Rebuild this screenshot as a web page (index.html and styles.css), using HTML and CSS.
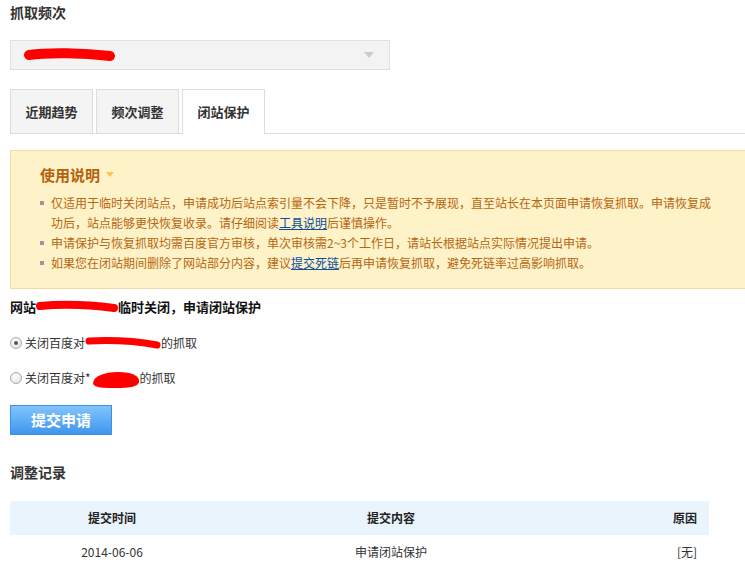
FILE: index.html
```
<!DOCTYPE html>
<html>
  <head>
    <meta charset="utf-8">
    <link rel="stylesheet" href="styles.css">
  </head>
  <body>
    <div class="page">
      <h2 class="title">抓取频次</h2>

      <div class="select">
        <svg class="scribble" width="92" height="16" viewBox="0 0 92 16">
          <path d="M5 8 C 25 5, 60 6, 86 9" stroke="#f00" stroke-width="10" stroke-linecap="round" fill="none"/>
        </svg>
        <span class="arrow"></span>
      </div>

      <div class="tabs">
        <div class="tab">近期趋势</div>
        <div class="tab">频次调整</div>
        <div class="tab active">闭站保护</div>
      </div>

      <div class="notice">
        <div class="notice-title">使用说明 <span class="caret"></span></div>
        <ul class="notice-list">
          <li>仅适用于临时关闭站点，申请成功后站点索引量不会下降，只是暂时不予展现，直至站长在本页面申请恢复抓取。申请恢复成功后，站点能够更快恢复收录。请仔细阅读<a href="#">工具说明</a>后谨慎操作。</li>
          <li>申请保护与恢复抓取均需百度官方审核，单次审核需2~3个工作日，请站长根据站点实际情况提出申请。</li>
          <li>如果您在闭站期间删除了网站部分内容，建议<a href="#">提交死链</a>后再申请恢复抓取，避免死链率过高影响抓取。</li>
        </ul>
      </div>

      <div class="site-line">网站<svg class="redact" width="82" height="14" viewBox="0 0 82 14"><path d="M4 6 C 25 4, 55 5, 78 8" stroke="#f00" stroke-width="8" stroke-linecap="round" fill="none"/></svg>临时关闭，申请闭站保护</div>

      <label class="option">
        <input type="radio" name="close" checked>
        <span>关闭百度对<svg class="redact" width="76" height="14" viewBox="0 0 76 14"><path d="M4 5 C 25 4, 50 5, 72 9" stroke="#f00" stroke-width="7" stroke-linecap="round" fill="none"/></svg>的抓取</span>
      </label>

      <label class="option">
        <input type="radio" name="close">
        <span>关闭百度对*<svg class="redact blob" width="48" height="18" viewBox="0 0 48 18"><path d="M1 12 C 2 5, 12 1, 26 1 C 40 1, 48 5, 47 11 C 46 17, 32 17, 20 17 C 8 17, 1 16, 1 12 Z" fill="#f00"/></svg>的抓取</span>
      </label>

      <button class="submit">提交申请</button>

      <h2 class="title records">调整记录</h2>

      <table class="log">
        <thead>
          <tr>
            <th class="c-time">提交时间</th>
            <th class="c-content">提交内容</th>
            <th class="c-reason">原因</th>
          </tr>
        </thead>
        <tbody>
          <tr>
            <td class="c-time">2014-06-06</td>
            <td class="c-content">申请闭站保护</td>
            <td class="c-reason">[无]</td>
          </tr>
        </tbody>
      </table>
    </div>
  </body>
</html>
```

FILE: styles.css
```
html, body {
  margin: 0;
  padding: 0;
  background: #fff;
}

body {
  font-family: "Noto Sans CJK SC", "Liberation Sans", sans-serif;
  font-size: 12px;
  color: #333;
  overflow: hidden;
}

.page {
  padding-left: 10px;
}

.title {
  margin: 0;
  padding-top: 2px;
  font-size: 14px;
  line-height: 20px;
  font-weight: bold;
  color: #333;
}

.select {
  margin-top: 18px;
  width: 378px;
  height: 28px;
  border: 1px solid #e0e0e0;
  background: #f3f3f3;
  position: relative;
  display: flex;
  align-items: center;
}
  .select .scribble {
    margin-left: 13px;
  }
  .select .arrow {
    position: absolute;
    right: 15px;
    top: 11px;
    border-left: 5px solid transparent;
    border-right: 5px solid transparent;
    border-top: 6px solid #ccc;
  }

.tabs {
  margin-top: 19px;
  display: flex;
  gap: 3px;
  border-bottom: 1px solid #ddd;
}

.tab {
  width: 81px;
  height: 43px;
  line-height: 43px;
  text-align: center;
  font-size: 13px;
  font-weight: bold;
  color: #333;
  background: #f4f4f4;
  border: 1px solid #ddd;
  border-bottom: none;
}
  .tab.active {
    background: #fff;
    margin-bottom: -1px;
    height: 44px;
  }

.notice {
  margin-top: 16px;
  background: #fef2c8;
  border: 1px solid #f6d9a4;
  border-right: none;
  padding: 14px 0 15px 0;
}

.notice-title {
  padding-left: 29px;
  font-size: 15px;
  line-height: 20px;
  font-weight: bold;
  color: #b5610c;
}
  .notice-title .caret {
    display: inline-block;
    vertical-align: middle;
    margin-left: 3px;
    margin-top: -4px;
    border-left: 4px solid transparent;
    border-right: 4px solid transparent;
    border-top: 5px solid #f8c84a;
  }

.notice-list {
  margin: 8px 0 0 0;
  padding: 0 28px 0 29px;
  list-style: none;
  color: #b8660f;
  line-height: 20px;
}
  .notice-list li {
    position: relative;
    padding-left: 11px;
  }
  .notice-list li::before {
    content: "";
    position: absolute;
    left: 0;
    top: 8px;
    width: 4px;
    height: 4px;
    background: #999;
  }
  .notice-list a {
    color: #0b4da1;
    text-decoration: underline;
  }

.site-line {
  margin-top: 8px;
  line-height: 20px;
  font-size: 13px;
  font-weight: bold;
  color: #111;
}

.redact {
  vertical-align: middle;
  margin-top: -3px;
}
  .redact.blob {
    margin-left: 1px;
    margin-top: 0;
  }

.option {
  display: flex;
  align-items: center;
  margin-top: 16px;
  line-height: 20px;
  color: #333;
}
  .option + .option {
    margin-top: 15px;
  }
  .option input {
    appearance: none;
    -webkit-appearance: none;
    margin: 0 3px 0 0;
    width: 12px;
    height: 12px;
    border-radius: 50%;
    border: 1px solid #aaa;
    background: radial-gradient(circle at 40% 35%, #fff, #ddd);
    position: relative;
  }
  .option input:checked::after {
    content: "";
    position: absolute;
    left: 3px;
    top: 3px;
    width: 4px;
    height: 4px;
    border-radius: 50%;
    background: #555;
  }

.submit {
  display: block;
  margin-top: 16px;
  width: 102px;
  height: 30px;
  border: 1px solid #3d8fe0;
  background: linear-gradient(#82c4fb, #3f96ef);
  color: #fff;
  font-family: inherit;
  font-size: 15px;
  font-weight: bold;
  padding: 0;
}

.records {
  margin-top: 27px;
  padding-top: 0;
}

.log {
  margin-top: 19px;
  width: 699px;
  border-collapse: collapse;
}
  .log th {
    background: #e9f4fc;
    height: 34px;
    font-weight: bold;
    color: #222;
    padding: 0;
  }
  .log td {
    height: 34px;
    color: #333;
    padding: 0;
  }
  .log .c-time {
    width: 204px;
    text-align: center;
  }
  .log .c-content {
    width: 354px;
    text-align: center;
  }
  .log .c-reason {
    text-align: right;
    padding-right: 12px;
  }
```
